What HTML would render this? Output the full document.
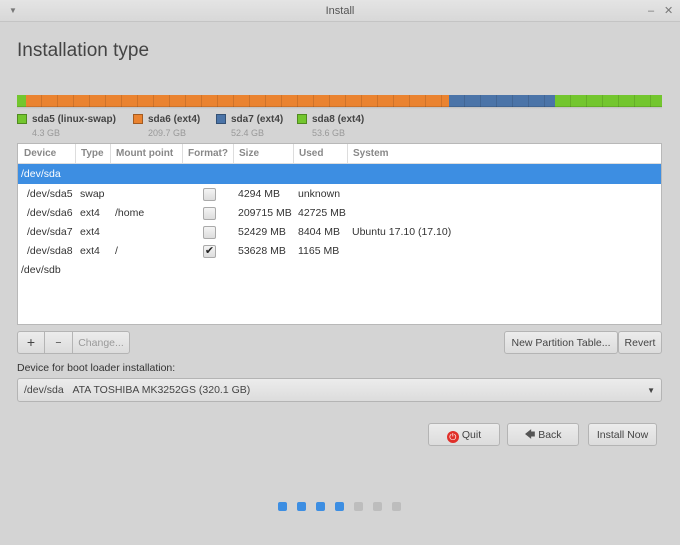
<!DOCTYPE html>
<html><head><meta charset="utf-8"><style>
*{box-sizing:border-box;margin:0;padding:0}
body{width:680px;height:545px;background:#d4d4d4;font-family:"Liberation Sans",sans-serif;font-size:11px;color:#333;position:relative;overflow:hidden}
.a{position:absolute}
.tb{left:0;top:0;width:680px;height:22px;background:linear-gradient(#e4e4e4,#d8d8d8);border-bottom:1px solid #c4c4c4;text-align:center;line-height:22px;font-size:11px;color:#555}
h1{position:absolute;left:17px;top:40px;font-weight:normal;font-size:19px;color:#444}
.bar{top:95px;height:12px;background-image:repeating-linear-gradient(90deg,rgba(0,0,0,0) 0 15px,rgba(0,0,0,.12) 15px 16px);}
.sw{width:10px;height:10px;border:1px solid rgba(0,0,0,.3)}
.lg{font-weight:bold;color:#444;font-size:10px}
.sub{font-size:9px;color:#999}
.tbl{left:17px;top:143px;width:645px;height:182px;background:#fff;border:1px solid #b8b8b8;font-size:10.5px}
.hd{height:20px;border-bottom:1px solid #ddd;color:#888;font-weight:bold;font-size:10px}
.hd span{position:absolute;top:4px}
.vl{position:absolute;top:0;width:1px;height:20px;background:#ddd}
.row{position:absolute;left:0;width:643px;height:19px;line-height:21px}
.row span{position:absolute}
.cb{position:absolute;left:185px;top:4px;width:13px;height:13px;border:1px solid #aaa;border-radius:2px;background:linear-gradient(#f4f4f4,#ddd)}
.btn{position:absolute;height:23px;border:1px solid #b4b4b4;border-radius:3px;background:linear-gradient(#ececec,#dcdcdc);line-height:23px;text-align:center;color:#444;font-size:10.5px}
.dot{position:absolute;top:502px;width:9px;height:9px;border-radius:2px}
</style></head><body>
<div class="a tb">Install<span class="a" style="left:9px;top:0;font-size:8px;color:#777">▼</span><span class="a" style="left:648px;color:#777">–</span><span class="a" style="left:664px;color:#777">✕</span></div>
<h1>Installation type</h1>
<div class="a bar" style="left:17px;width:9px;background-color:#73c62e"></div>
<div class="a bar" style="left:26px;width:423px;background-color:#ea8330"></div>
<div class="a bar" style="left:449px;width:106px;background-color:#4b74a8"></div>
<div class="a bar" style="left:555px;width:107px;background-color:#73c62e"></div>
<div class="a" style="left:17px;top:106px;width:645px;height:3px;background:linear-gradient(rgba(0,0,0,.15),rgba(0,0,0,0))"></div>
<div class="a sw" style="left:17px;top:114px;background:#73c62e"></div><span class="a lg" style="left:32px;top:114px">sda5 (linux-swap)</span><span class="a sub" style="left:32px;top:128px">4.3 GB</span>
<div class="a sw" style="left:133px;top:114px;background:#ea8330"></div><span class="a lg" style="left:148px;top:114px">sda6 (ext4)</span><span class="a sub" style="left:148px;top:128px">209.7 GB</span>
<div class="a sw" style="left:216px;top:114px;background:#4b74a8"></div><span class="a lg" style="left:231px;top:114px">sda7 (ext4)</span><span class="a sub" style="left:231px;top:128px">52.4 GB</span>
<div class="a sw" style="left:297px;top:114px;background:#73c62e"></div><span class="a lg" style="left:312px;top:114px">sda8 (ext4)</span><span class="a sub" style="left:312px;top:128px">53.6 GB</span>
<div class="a tbl">
<div class="hd"><span style="left:6px">Device</span><span style="left:63px">Type</span><span style="left:98px">Mount point</span><span style="left:170px">Format?</span><span style="left:221px">Size</span><span style="left:281px">Used</span><span style="left:335px">System</span>
<div class="vl" style="left:57px"></div><div class="vl" style="left:92px"></div><div class="vl" style="left:164px"></div><div class="vl" style="left:215px"></div><div class="vl" style="left:275px"></div><div class="vl" style="left:329px"></div></div>
<div class="row" style="top:20px;background:#3d8ee2;color:#fff;height:20px"><span style="left:3px">/dev/sda</span></div>
<div class="row" style="top:40px"><span style="left:9px">/dev/sda5</span><span style="left:62px">swap</span><div class="cb"></div><span style="left:220px">4294 MB</span><span style="left:280px">unknown</span></div>
<div class="row" style="top:59px"><span style="left:9px">/dev/sda6</span><span style="left:62px">ext4</span><span style="left:97px">/home</span><div class="cb"></div><span style="left:220px">209715 MB</span><span style="left:280px">42725 MB</span></div>
<div class="row" style="top:78px"><span style="left:9px">/dev/sda7</span><span style="left:62px">ext4</span><div class="cb"></div><span style="left:220px">52429 MB</span><span style="left:280px">8404 MB</span><span style="left:334px">Ubuntu 17.10 (17.10)</span></div>
<div class="row" style="top:97px"><span style="left:9px">/dev/sda8</span><span style="left:62px">ext4</span><span style="left:97px">/</span><div class="cb" style="line-height:11px;text-align:center;font-size:11px;color:#222">✔</div><span style="left:220px">53628 MB</span><span style="left:280px">1165 MB</span></div>
<div class="row" style="top:116px"><span style="left:3px">/dev/sdb</span></div>
</div>
<div class="btn" style="left:17px;top:331px;width:28px;border-radius:3px 0 0 3px;font-size:14px;line-height:21px">+</div>
<div class="btn" style="left:44px;top:331px;width:29px;border-radius:0">−</div>
<div class="btn" style="left:72px;top:331px;width:58px;border-radius:0 3px 3px 0;color:#999">Change...</div>
<div class="btn" style="left:504px;top:331px;width:114px">New Partition Table...</div>
<div class="btn" style="left:618px;top:331px;width:44px">Revert</div>
<span class="a" style="left:17px;top:362px;font-size:10.5px">Device for boot loader installation:</span>
<div class="btn" style="left:17px;top:378px;width:645px;height:24px;text-align:left;padding-left:6px;line-height:23px">/dev/sda&nbsp;&nbsp;&nbsp;ATA TOSHIBA MK3252GS (320.1 GB)<span class="a" style="right:6px;top:0;font-size:8px">▼</span></div>
<div class="btn" style="left:428px;top:423px;width:72px"><span style="display:inline-block;width:12px;height:12px;border-radius:50%;background:#e0302a;color:#fff;font-size:9px;line-height:12px;vertical-align:-2px;margin-right:3px">⏻</span>Quit</div>
<div class="btn" style="left:507px;top:423px;width:72px"><span style="color:#555">🡄</span> Back</div>
<div class="btn" style="left:588px;top:423px;width:69px">Install Now</div>
<div class="dot" style="left:278px;background:#3d8ee2"></div>
<div class="dot" style="left:297px;background:#3d8ee2"></div>
<div class="dot" style="left:316px;background:#3d8ee2"></div>
<div class="dot" style="left:335px;background:#3d8ee2"></div>
<div class="dot" style="left:354px;background:#bdbdbd"></div>
<div class="dot" style="left:373px;background:#bdbdbd"></div>
<div class="dot" style="left:392px;background:#bdbdbd"></div>
</body></html>
